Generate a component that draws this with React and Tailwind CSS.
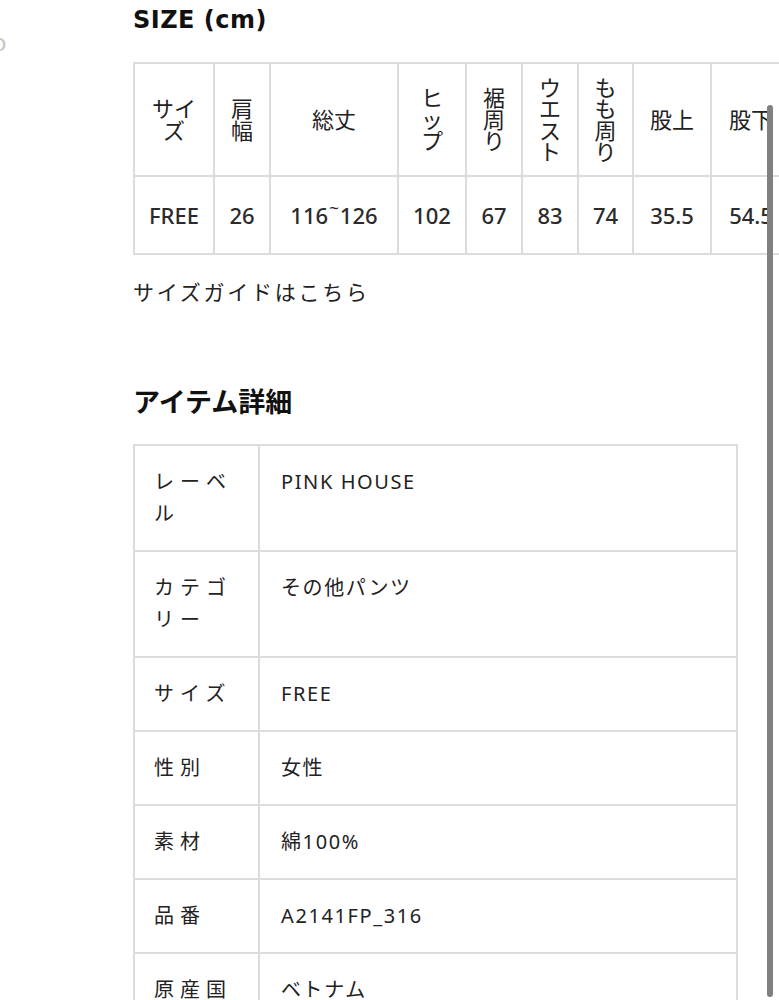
const sizeCols = [
  { w: 'w-[78px]', head: ['サイ', 'ズ'], value: 'FREE' },
  { w: 'w-[54px]', head: ['肩', '幅'], value: '26' },
  { w: 'w-[126px]', head: ['総丈'], value: ['116', '~', '126'] },
  { w: 'w-[66px]', head: ['ヒ', 'ッ', 'プ'], value: '102' },
  { w: 'w-[54px]', head: ['裾', '周', 'り'], value: '67' },
  { w: 'w-[54px]', head: ['ウ', 'エ', 'ス', 'ト'], value: '83' },
  { w: 'w-[53px]', head: ['も', 'も', '周', 'り'], value: '74' },
  { w: 'w-[76px]', head: ['股上'], value: '35.5' },
  { w: 'w-[78px]', head: ['股下'], value: '54.5' },
];

const details = [
  { label: 'レーベル', value: 'PINK HOUSE' },
  { label: 'カテゴリー', value: 'その他パンツ' },
  { label: 'サイズ', value: 'FREE' },
  { label: '性別', value: '女性' },
  { label: '素材', value: '綿100%' },
  { label: '品番', value: 'A2141FP_316' },
  { label: '原産国', value: 'ベトナム' },
];

const jp = "font-['Noto_Sans','Noto_Sans_CJK_JP',sans-serif]";

export default function App() {
  return (
    <div className={`relative w-[779px] h-[1000px] overflow-hidden bg-white text-[#222] ${jp}`}>
      <div className="flex">
        {/* left gutter, edge of previous block */}
        <div className="w-[133px] shrink-0 overflow-hidden">
          <span className="block -ml-[8px] mt-[30px] text-[24px] leading-none text-[#c4c4c4]">o</span>
        </div>

        <main className="flex-1 min-w-0 pb-10">
          <h2 className="mt-[4px] text-[24px] leading-[32px] font-bold text-[#111] tracking-[0.02em] font-['DejaVu_Sans',sans-serif]">
            SIZE (cm)
          </h2>

          {/* size table */}
          <div className="mt-[26px] w-max inline-flex flex-col gap-[2px] p-[2px] bg-[#dcdcdc]">
            <div className="flex gap-[2px]">
              {sizeCols.map((c, i) => (
                <div key={i} className={`${c.w} h-[111px] bg-white flex flex-col items-center justify-center text-[22px] leading-[21.5px] text-[#222]`}>
                  {c.head.map((l, j) => (
                    <span key={j}>{l}</span>
                  ))}
                </div>
              ))}
            </div>
            <div className="flex gap-[2px]">
              {sizeCols.map((c, i) => (
                <div key={i} className={`${c.w} h-[76px] bg-white flex items-center justify-center text-[22px] font-medium text-[#2b2b2b] whitespace-nowrap`}>
                  {Array.isArray(c.value) ? (
                    <>
                      {c.value[0]}
                      <span className="relative -top-[7px] text-[17px] px-[1px]">{c.value[1]}</span>
                      {c.value[2]}
                    </>
                  ) : (
                    c.value
                  )}
                </div>
              ))}
            </div>
          </div>

          <p className="mt-[21px] text-[21px] leading-[32px] tracking-[0.13em] text-[#222]">サイズガイドはこちら</p>

          <h2 className="mt-[76px] text-[27px] leading-[36px] font-bold text-[#111]">アイテム詳細</h2>

          {/* item details */}
          <div className="mt-[24px] w-[605px] grid grid-cols-[123px_1fr] gap-[2px] p-[2px] bg-[#dcdcdc]">
            {details.map((d) => (
              <div key={d.label} className="contents">
                <div className="bg-white pl-[19px] pr-[18px] py-[20px] text-[20px] leading-[32px] tracking-[0.3em] text-[#222]">
                  {d.label}
                </div>
                <div className="bg-white pl-[21px] pr-4 py-[20px] text-[20px] leading-[32px] tracking-[0.08em] text-[#222]">
                  {d.value}
                </div>
              </div>
            ))}
          </div>
        </main>
      </div>

      {/* scroll indicator */}
      <div className="absolute right-[6px] top-[105px] bottom-[3px] w-[6px] rounded-full bg-[#808080]" />
    </div>
  );
}
